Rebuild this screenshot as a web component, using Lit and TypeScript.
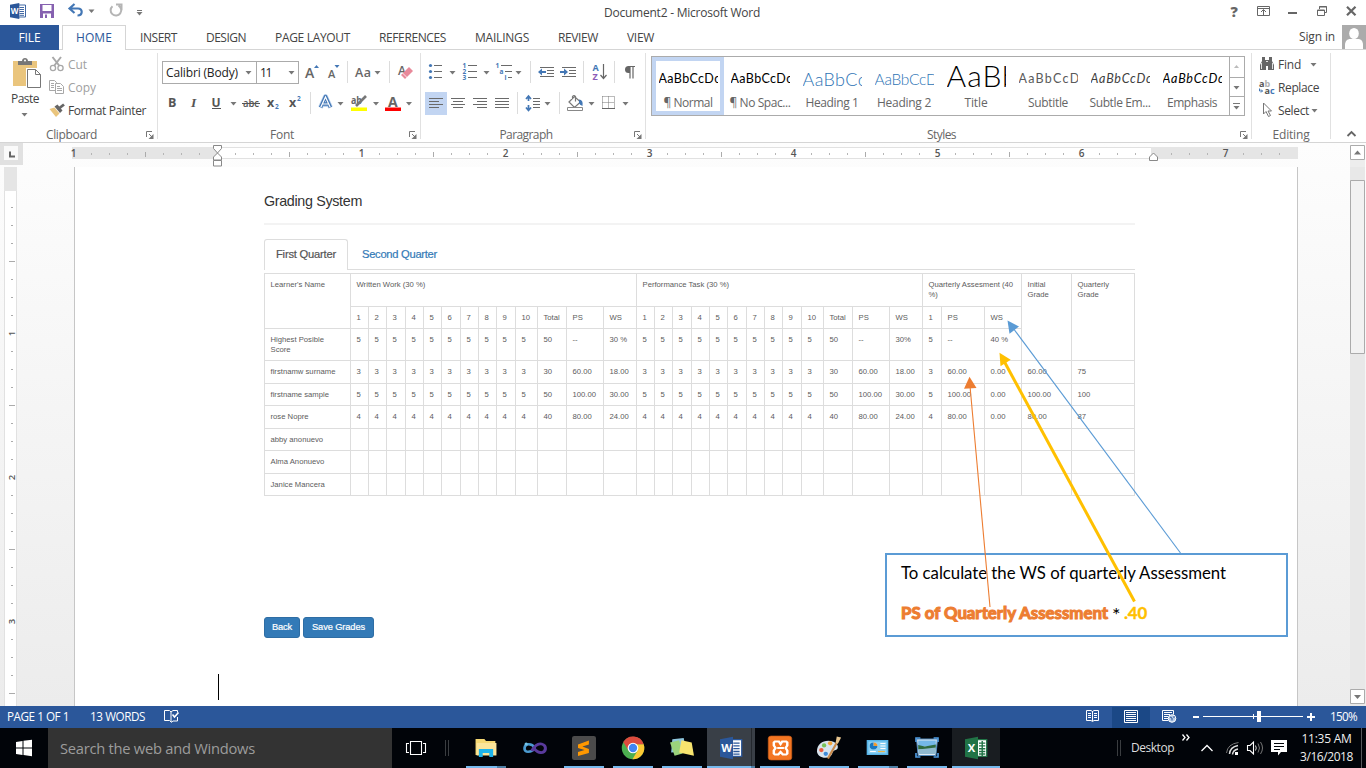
import { LitElement, html, svg, css } from "lit";
import { customElement } from "lit/decorators.js";
import { classMap } from "lit/directives/class-map.js";

// Drawing cell: every cell uses window coordinates through its viewBox.
const art = (x: number, y: number, w: number, h: number, body: unknown) =>
  html`<svg class="art" width=${w} height=${h} viewBox="${x} ${y} ${w} ${h}">${body}</svg>`;

// Label whose tracking is tuned to a given width.
const fit = (text: string, w: number, cls = "") =>
  html`<span class="fit ${cls}" data-w=${w}>${text}</span>`;

const tri = (x: number, y: number, c = "#777") => svg`<path d="M${x} ${y}h6l-3 3.4z" fill=${c} />`;
const sep = (x: number, y = 61, h = 22) => svg`<path d="M${x}.5 ${y}v${h}" stroke="#dcdcdc" />`;
const lines = (y: number, spans: number[][], step = 4, c = "#6a6a6a") =>
  spans.map(([a, b], i) => svg`<path d="M${a} ${y + i * step + 0.5}H${b}" stroke=${c} />`);

// Task bar glyphs are drawn around one centre, then placed and scaled at another.
const place = (from: number, to: number, sx: number, sy: number, body: unknown) =>
  svg`<g transform="translate(${to} 748) scale(${sx} ${sy}) translate(${-from} -748)">${body}</g>`;

const wordLogo = (x: number, y: number, s: number, letter = "W", c = "#2b579a") => svg`
  <g transform="translate(${x} ${y}) scale(${s})">
    <path d="M8 2h7.5v12H8z" fill="#fff" stroke=${c} stroke-width=".9" />
    ${letter === "W"
      ? svg`<path d="M9.5 4.5h4.5M9.5 6.5h4.5M9.5 8.5h4.5M9.5 10.5h4.5M9.5 12.3h4.5" stroke=${c} stroke-width=".9" />`
      : svg`<path d="M10 4.5h4.5M10 6.5h4.5M10 8.5h4.5M10 10.5h4.5M10 12.3h4.5M12.3 3v11" stroke=${c} stroke-width="1" />`}
    <path d="M0 1.8L9.3 0v16L0 14.2z" fill=${c} />
    <text x="4.7" y="11" text-anchor="middle" font-family="Open Sans" font-weight="700" font-size="8" fill="#fff">${letter}</text>
  </g>`;

const TABS: [string, number][] = [
  ["INSERT", 37], ["DESIGN", 40], ["PAGE LAYOUT", 75], ["REFERENCES", 67],
  ["MAILINGS", 54], ["REVIEW", 40], ["VIEW", 27],
];

const STYLES: [string, number, string, string, number][] = [
  ["¶ Normal", 49, "AaBbCcDc", "body", 62],
  ["¶ No Spac...", 61, "AaBbCcDc", "body", 62],
  ["Heading 1", 53, "AaBbCc", "h1", 64],
  ["Heading 2", 54, "AaBbCcD", "h2", 63],
  ["Title", 23, "AaBb", "title", 73],
  ["Subtitle", 40, "AaBbCcD", "sub", 62],
  ["Subtle Em...", 61, "AaBbCcDc", "subem", 62],
  ["Emphasis", 50, "AaBbCcDc", "em", 62],
];

type Cell = { t: string; c?: number; r?: number; };
const nums = ["1", "2", "3", "4", "5", "6", "7", "8", "9", "10"];
const cells = (a: string[]): Cell[] => a.map((t) => ({ t }));
const student = (name: string, v: string, total: string, ps: string, ws: string, g: string) => {
  const part = [...nums.map(() => v), total, ps, ws];
  return cells([name, ...part, ...part, v, ps, "0.00", ps, g]);
};
const blank = (name: string) => cells([name, ...Array(31).fill("")]);
const five = nums.map(() => "5");
const GRID: Cell[] = [
  { t: "Learner's Name", r: 2 },
  { t: "Written Work (30 %)", c: 13 },
  { t: "Performance Task (30 %)", c: 13 },
  { t: "Quarterly Assesment (40 %)", c: 3 },
  { t: "Initial Grade", r: 3 },
  { t: "Quarterly Grade", r: 3 },
  ...cells([...nums, "Total", "PS", "WS", ...nums, "Total", "PS", "WS", "1", "PS", "WS"]),
  ...cells(["Highest Posible Score", ...five, "50", "--", "30 %", ...five, "50", "--", "30%", "5", "--", "40 %"]),
  ...student("firstnamw surname", "3", "30", "60.00", "18.00", "75"),
  ...student("firstname sample", "5", "50", "100.00", "30.00", "100"),
  ...student("rose Nopre", "4", "40", "80.00", "24.00", "87"),
  ...blank("abby anonuevo"),
  ...blank("Alma Anonuevo"),
  ...blank("Janice Mancera"),
];

@customElement("app-root")
class AppRoot extends LitElement {
  static styles = css`
    :host { display: block; width: 1366px; height: 768px; overflow: hidden; font-family: "Open Sans", "Noto Sans", sans-serif; font-size: 12px; color: #444; background: #fff; }
    * { box-sizing: border-box; }
    svg { font-family: "Open Sans", sans-serif; }
    .art { display: block; flex: none; overflow: visible; }
    .fit { display: inline-block; white-space: pre; flex: none; }
    .row { display: flex; }
    .grow { flex: 1; }
    .app { display: flex; flex-direction: column; height: 768px; }

    .titlebar { display: grid; grid-template-columns: 604px 1fr auto; height: 25px; line-height: 25px; flex: none; }
    .tabs { display: flex; height: 25px; line-height: 25px; border-bottom: 1px solid #d5d5d5; flex: none; }
    .file { width: 59px; height: 25px; background: #2b579a; color: #fff; text-align: center; margin-right: 3px; }
    .home { width: 64px; height: 25px; border: 1px solid #d5d5d5; border-bottom: 0; background: #fff; color: #2b579a; text-align: center; line-height: 24px; }
    .tab { padding-left: 14px; padding-right: 15px; }
    .signin { line-height: 24px; padding-right: 7px; }

    .ribbon { display: flex; height: 93px; padding-top: 3px; border-bottom: 1px solid #d5d5d5; flex: none; }
    .group { display: flex; flex-direction: column; height: 86px; border-right: 1px solid #e1e1e1; flex: none; }
    .body { flex: 1; display: flex; min-height: 0; }
    .foot { display: flex; height: 10px; line-height: 12px; color: #666; }
    .foot-label { flex: 1; text-align: center; }
    .clip { width: 158px; } .font { width: 263px; } .para { width: 225px; } .styles { width: 606px; } .edit { width: 79px; }
    .stack { flex-direction: column; }
    .paste { width: 50px; text-align: center; line-height: 17px; }
    .cmd { display: flex; height: 23px; line-height: 23px; }
    .muted { color: #a0a0a0; }
    .tools { flex-direction: column; gap: 8px; padding-top: 8px; }
    .indent { padding-left: 4px; }
    .combo { display: flex; height: 23px; line-height: 21px; border: 1px solid #ababab; color: #222; padding-left: 3px; justify-content: space-between; }
    .combo-name { width: 94px; border-right: 0; }
    .combo-size { width: 43px; }

    .gallery { display: flex; width: 594px; height: 60px; margin: 3px 0 0 5px; border: 1px solid #ababab; }
    .style { width: 72px; height: 58px; border: 4px solid transparent; display: flex; flex-direction: column; align-items: center; }
    .picked { border-color: #c2d5f2; }
    .preview { width: 59px; height: 31px; overflow: hidden; font-family: Lato, sans-serif; color: #000; line-height: 36px; font-size: 12.5px; }
    .p-h1 { font-weight: 300; font-size: 18px; color: #2e74b5; }
    .p-h2 { font-weight: 300; font-size: 15.5px; color: #2e74b5; }
    .p-title { font-weight: 300; font-size: 30px; line-height: 28px; }
    .p-sub { color: #5a5a5a; }
    .p-subem { font-style: italic; color: #404040; }
    .p-em { font-style: italic; }
    .caption { height: 19px; line-height: 22px; color: #666; }

    .doc { display: flex; flex-direction: column; height: 563px; flex: none; background: linear-gradient(#fdfdfd, #ececec); overflow: hidden; }
    .canvas { display: flex; height: 539px; }
    .page { position: relative; width: 1224px; height: 539px; border: solid #c6c6c6; border-width: 0 1px; background: #fff; padding-top: 24px; font-family: "Liberation Sans", Arial, sans-serif; flex: none; }
    .sheet { width: 871px; margin-left: 189px; color: #333; }
    .heading { height: 20px; line-height: 20px; font-size: 14.3px; }
    .rule { height: 2px; margin-top: 12px; background: #f3f3f3; }
    .nav { display: flex; height: 31px; margin-top: 14px; border-bottom: 1px solid #ddd; line-height: 30px; font-size: 11.2px; }
    .nav-on { width: 84px; height: 31px; border: 1px solid #ddd; border-bottom: 0; border-radius: 3px 3px 0 0; background: #fff; padding-left: 11px; color: #555; line-height: 28px; -webkit-text-stroke: .2px #555; }
    .nav-off { padding-left: 14px; color: #337ab7; -webkit-text-stroke: .2px #337ab7; }
    .grid { display: grid; margin-top: 3px; border: solid #ddd; border-width: 1px 0 0 1px; font-size: 7.7px; line-height: 10px; color: #5c5c5c;
      grid-template-columns: 86px 18px 18px 19px 18px 18px 19px 18px 18px 19px 22px 29px 37px 33px 18px 18px 19px 18px 18px 19px 18px 18px 19px 22px 29px 37px 33px 19px 43px 37px 50px 63px;
      grid-template-rows: 33px 22px 32px 23px 22px 23px 22px 23px 22px; }
    .cell { border: solid #ddd; border-width: 0 1px 1px 0; padding: 6px 0 0 5.5px; min-width: 0; }
    .narrow { padding-right: 6px; }
    .buttons { display: flex; gap: 3px; margin-top: 121px; }
    .btn { height: 21px; border-radius: 3px; background: #337ab7; border: 1px solid #2e6da4; line-height: 19px; color: #fff; font-size: 9.3px; text-align: center; -webkit-text-stroke: .2px #fff; }
    .back { width: 36px; } .save { width: 71px; }
    .caret { width: 1px; height: 26px; margin: 36px 0 0 143px; background: #000; }
    .callout { position: absolute; left: 810px; top: 386px; width: 403px; height: 84px; border: 2px solid #5b9bd5; background: #fff; padding: 0 14px; font-family: Lato, sans-serif; font-size: 16.8px; color: #000; }
    .line-a { height: 36px; line-height: 36px; }
    .line-b { height: 40px; line-height: 43px; display: flex; }
    .star { font-size: 20px; line-height: 47px; width: 9px; }
    .orange { color: #ed7d31; font-weight: 700; -webkit-text-stroke: 1.1px #ed7d31; margin-right: 4px; }
    .gold { color: #ffc000; font-weight: 700; margin-left: 3px; -webkit-text-stroke: .4px #ffc000; }
    .arrows { position: absolute; left: 0; top: 0; }

    .status { display: flex; height: 22px; line-height: 21px; background: #2b579a; color: #fff; font-size: 11.7px; padding-left: 7px; flex: none; }
    .taskbar { display: flex; height: 40px; background: #010409; color: #fff; flex: none; }
    .search { width: 344px; background: #333; color: #9c9c9c; font-size: 14.7px; line-height: 40px; padding-left: 12px; }
    .tray { line-height: 40px; color: #ddd; }
    .clock { width: 61px; padding-top: 2px; line-height: 17.5px; text-align: center; color: #eee; }
    .words { margin-left: 21px; }
    .zoomtext { margin-left: 13px; }
  `;

  firstUpdated() {
    this.renderRoot.querySelectorAll<HTMLElement>(".fit").forEach((el) => {
      const w = Number(el.dataset.w);
      const natural = el.getBoundingClientRect().width;
      const n = (el.textContent ?? "").length;
      el.style.letterSpacing = `${((w - natural) / n).toFixed(3)}px`;
    });
  }

  launcher() {
    return art(0, 0, 14, 10, svg`<path d="M3.5 8V2.5H9" fill="none" stroke="#777" /><path d="M6 5l3 3" stroke="#777" /><path d="M10.500 5v5h-5z" fill="#777" />`);
  }

  titlebar() {
    return html`<div class="titlebar">
      <div class="row">
        ${art(0, 0, 33, 25, wordLogo(10, 3, 1))}
        ${art(33, 0, 29, 25, svg`<path d="M40 4h14v14H40z" fill="#8661b0" /><path d="M42.500 5h9v6h-9z" fill="#fff" /><path d="M43 13.500h8V18h-8z" fill="#fff" /><path d="M45 14.500h2V18h-2z" fill="#8661b0" />`)}
        ${art(62, 0, 40, 25, svg`<path d="M74.500 4l-5 4.500 5 4.500M70 8.500h8c5 0 5 7-.5 7" fill="none" stroke="#4377b5" stroke-width="2.200" />${tri(88.5, 9.5)}`)}
        ${art(102, 0, 50, 25, svg`<path d="M112.500 6.200a5.300 5.300 0 1 0 6-.6M116 4.600h5.500v5.600" fill="none" stroke="#b5b5b5" stroke-width="2" /><path d="M137 10.500h5" stroke="#777" />${tri(136.5, 12)}`)}
      </div>
      <div>${fit("Document2 - Microsoft Word", 156)}</div>
      <div class="row">
        ${art(1224, 0, 22, 25, svg`<text x="1230.500" y="16.500" font-size="14.500" font-weight="800" fill="#666">?</text>`)}
        ${art(1246, 0, 34, 25, svg`<path d="M1257.500 6.500h12v9h-12zM1257.500 8.500h12M1263.500 15v-5M1261 12l2.500-2.500 2.500 2.500" fill="none" stroke="#666" />`)}
        ${art(1280, 0, 28, 25, svg`<path d="M1288 13h9" stroke="#666" stroke-width="2" />`)}
        ${art(1308, 0, 28, 25, svg`<path d="M1317.500 10h7v5.500h-7zM1317 10.500h8M1319.500 9V6.500h7v6h-2M1319 7h8" fill="none" stroke="#666" />`)}
        ${art(1336, 0, 30, 25, svg`<path d="M1347 6.700l8.500 8.600M1355.500 6.700l-8.500 8.600" stroke="#666" stroke-width="2.200" />`)}
      </div>
    </div>`;
  }

  tabs() {
    return html`<div class="tabs">
      <div class="file">${fit("FILE", 22)}</div>
      <div class="home">${fit("HOME", 36)}</div>
      ${TABS.map(([t, w]) => html`<div class="tab">${fit(t, w)}</div>`)}
      <div class="grow"></div>
      <div class="signin">${fit("Sign in", 36)}</div>
      ${art(1342, 25, 24, 24, svg`<path d="M1342 25h24v24h-24z" fill="#ababab" /><ellipse cx="1354" cy="33.500" rx="4.800" ry="5.600" fill="#fff" /><path d="M1345 49v-4c0-4 2.500-6 5-6h8c3 0 5 2 5 6v4z" fill="#fff" />`)}
    </div>`;
  }

  clipboard() {
    return html`<div class="group clip"><div class="body">
      <div class="paste">
        ${art(0, 53, 50, 37, svg`<path d="M13 61h24v25H13z" fill="#eac57d" /><path d="M18 65v-4h4c0-4 6-4 6 0h4v4z" fill="#777" /><circle cx="25" cy="60.500" r="1" fill="#fff" /><path d="M26 68h11v18H26z" fill="#fff" /><path d="M27.500 69.500h8l5 5v13h-13z" fill="#fff" stroke="#777" /><path d="M35.500 69.500v5h5" fill="none" stroke="#777" />`)}
        ${fit("Paste", 28)}
        ${art(0, 107, 50, 15, tri(21.5, 113))}
      </div>
      <div>
        <div class="cmd muted">${art(50, 53, 18, 23, svg`<path d="M52.500 57l7 9M61 57l-7 9" stroke="#a8a8a8" stroke-width="2" /><circle cx="53" cy="68" r="2.600" fill="none" stroke="#a8a8a8" stroke-width="1.300" /><circle cx="60.500" cy="68" r="2.600" fill="none" stroke="#a8a8a8" stroke-width="1.300" />`)}${fit("Cut", 19)}</div>
        <div class="cmd muted">${art(50, 76, 18, 23, svg`<path d="M49.500 80.500h5l2 2v8h-7zM51 83.500h3M51 85.500h3M51 87.500h3" fill="none" stroke="#a8a8a8" /><path d="M55.500 83.500h5l3 3v7h-8z" fill="#fff" stroke="#a8a8a8" /><path d="M57 86.500h3M57 88.500h5M57 90.500h5" stroke="#a8a8a8" />`)}${fit("Copy", 28)}</div>
        <div class="cmd">${art(50, 99, 18, 23, svg`<path d="M49.500 109l5-1.500 5 6-3.500 3.500z" fill="#eac57d" /><path d="M54.500 106.500l3-2 5 6-2.500 2.500z" fill="#666" /><path d="M59.500 108l4.500-3.500" stroke="#666" stroke-width="2.800" />`)}${fit("Format Painter", 78)}</div>
      </div>
    </div><div class="foot"><div class="foot-label">${fit("Clipboard", 51)}</div>${this.launcher()}</div></div>`;
  }

  font() {
    return html`<div class="group font"><div class="body tools">
      <div class="row indent">
        <div class="combo combo-name">${fit("Calibri (Body)", 72)}${art(244, 62, 12, 21, tri(245.5, 71))}</div>
        <div class="combo combo-size">${fit("11", 11)}${art(286, 62, 12, 21, tri(288.5, 71))}</div>
        ${art(299, 61, 25, 23, svg`<text x="305" y="78" font-size="14" font-weight="600" fill="#666">A</text><path d="M314 68l2.500-3 2.500 3z" fill="#4377b5" />`)}
        ${art(324, 61, 24, 23, svg`<text x="328" y="78" font-size="11" font-weight="600" fill="#666">A</text><path d="M334.500 65h5l-2.500 3z" fill="#4377b5" />${sep(347)}`)}
        ${art(348, 61, 42, 23, svg`<text x="355" y="76.500" font-size="12.500" font-weight="600" fill="#666" textLength="16">Aa</text>${tri(374.5, 71)}${sep(389)}`)}
        ${art(390, 61, 30, 23, svg`<text x="398" y="75" font-size="12" font-weight="600" fill="#666">A</text><path d="M401 75l8-8 4 4-8 8z" fill="#e8899a" /><path d="M402.500 73l5 5" stroke="#fff" stroke-width=".8" />`)}
      </div>
      <div class="row indent">
        ${art(162, 92, 20, 23, svg`<text x="168" y="107" font-size="12.500" font-weight="700" fill="#555">B</text>`)}
        ${art(182, 92, 23, 23, svg`<text x="191" y="107" font-size="13.500" font-style="italic" font-weight="700" font-family="Liberation Serif" fill="#555">I</text>`)}
        ${art(205, 92, 34, 23, svg`<text x="211.500" y="106.500" font-size="12" font-weight="700" fill="#555">U</text><path d="M212 108.500h9" stroke="#555" />${tri(230.5, 102)}`)}
        ${art(239, 92, 24, 23, svg`<text x="243" y="107" font-size="11" fill="#555" font-weight="600" textLength="16" lengthAdjust="spacingAndGlyphs">abc</text><path d="M242 103.500h18" stroke="#555" />`)}
        ${art(263, 92, 22, 23, svg`<text x="267" y="107" font-size="12.500" font-weight="700" fill="#555">x</text><text x="275" y="109" font-size="6.500" font-weight="700" fill="#4377b5">2</text>`)}
        ${art(285, 92, 26, 23, svg`<text x="289" y="107" font-size="12.500" font-weight="700" fill="#555">x</text><text x="297" y="101" font-size="6.500" font-weight="700" fill="#4377b5">2</text>${sep(310, 92)}`)}
        ${art(311, 92, 36, 23, svg`<path d="M320.500 107.500L325.500 96.500L330.500 107.500M322.500 104.500h6" fill="none" stroke="#c0d6ef" stroke-width="5" stroke-linejoin="round" /><path d="M320.500 107.500L325.500 96.500L330.500 107.500M322.500 104h6" fill="none" stroke="#4377b5" stroke-width="3.400" stroke-linejoin="round" /><path d="M320.700 107.500L325.500 97L330.300 107.500M322.500 104h6" fill="none" stroke="#fff" stroke-width="1.200" />${tri(337.5, 102)}`)}
        ${art(347, 92, 34, 23, svg`<text x="351" y="104" font-size="11" font-weight="700" fill="#666" textLength="11" lengthAdjust="spacingAndGlyphs">ab</text><path d="M356 106l10-10" stroke="#777" stroke-width="2.600" /><path d="M351 107.500h16v3.500h-16z" fill="#ff0" />${tri(373, 102)}`)}
        ${art(381, 92, 39, 23, svg`<text x="388" y="107" font-size="14" font-weight="700" fill="#666">A</text><path d="M385 107.500h16v3.500h-16z" fill="red" />${tri(406, 102)}`)}
      </div>
    </div><div class="foot"><div class="foot-label">${fit("Font", 24)}</div>${this.launcher()}</div></div>`;
  }

  paragraph() {
    const dn = (x: number, y: number, t: string) => svg`<text x=${x} y=${y} font-size="6.500" font-weight="700" fill="#4377b5">${t}</text>`;
    const b = "#4377b5";
    return html`<div class="group para"><div class="body tools">
      <div class="row">
        ${art(421, 61, 37, 23, svg`${[65.5, 71.5, 77.5].map((y) => svg`<circle cx="430.500" cy=${y} r="1.600" fill=${b} /><path d="M434 ${y}h8" stroke="#6a6a6a" />`)}${tri(449.5, 71)}`)}
        ${art(458, 61, 35, 23, svg`${dn(462.5, 68, "1")}${dn(462.5, 74, "2")}${dn(462.5, 80, "3")}${lines(65, [[468, 477], [468, 477], [468, 477]], 6)}${tri(483.5, 71)}`)}
        ${art(493, 61, 38, 23, svg`${dn(495.5, 68, "1")}${dn(499.5, 74, "a")}${dn(504.5, 80, "i")}${lines(65, [[501, 512], [505, 512], [508, 512]], 6)}${tri(515.5, 71)}${sep(530)}`)}
        ${art(531, 61, 26, 23, svg`${lines(67, [[540, 554], [547, 554], [547, 554], [540, 554]], 3)}<path d="M538 72l4-3.500v2.500h4v2h-4v2.500z" fill=${b} />`)}
        ${art(557, 61, 27, 23, svg`${lines(67, [[562, 576], [569, 576], [569, 576], [562, 576]], 3)}<path d="M568 72l-4-3.500v2.500h-4v2h4v2.500z" fill=${b} />${sep(583)}`)}
        ${art(584, 61, 31, 23, svg`<text x="592.500" y="71" font-size="9" font-weight="700" fill=${b}>A</text><text x="592.500" y="79.500" font-size="9" font-weight="700" fill="#8c5cb8">Z</text><path d="M603.500 64v14M600.500 75l3 3.500 3-3.500" fill="none" stroke="#666" stroke-width="1.200" />${sep(614)}`)}
        ${art(615, 61, 30, 23, svg`<path d="M630 66.500v12M633 66.500v12M628 66.500h7" stroke="#666" stroke-width="1.200" /><path d="M630 66h-1.500a3.300 3.300 0 0 0 0 7H630z" fill="#666" />`)}
      </div>
      <div class="row">
        ${art(421, 92, 27, 23, svg`<path d="M425 92h22v23h-22z" fill="#c2d5f2" />${lines(98, [[429, 443], [429, 439], [429, 443], [429, 439]], 3)}`)}
        ${art(448, 92, 22, 23, lines(98, [[451, 465], [453, 463], [451, 465], [453, 463]], 3))}
        ${art(470, 92, 21, 23, lines(98, [[473, 487], [477, 487], [473, 487], [477, 487]], 3))}
        ${art(491, 92, 27, 23, svg`${lines(98, [[495, 509], [495, 509], [495, 509], [495, 509]], 3)}${sep(517, 92)}`)}
        ${art(518, 92, 42, 23, svg`<path d="M528.500 97v4M528.500 105v4M526 99l2.500-3 2.500 3M526 107.500l2.500 3 2.500-3" fill="none" stroke=${b} stroke-width="1.700" />${lines(98, [[533, 540], [533, 540], [533, 540], [533, 540]], 3)}${tri(544.5, 102)}${sep(559, 92)}`)}
        ${art(560, 92, 38, 23, svg`<path d="M569 102l5.500-5.500 6 5.500-6 5.500zM572.500 99v-2.500q1.500-2 3 0v5" fill="#fff" stroke="#777" stroke-width="1.200" /><path d="M579 99.500q4.500 0 3.500 6.500-3-1-3.500-3z" fill=${b} /><path d="M567.500 107.500h15v3h-15z" fill="#fff" stroke="#888" />${tri(588.5, 102)}`)}
        ${art(598, 92, 47, 23, svg`<path d="M602.500 96.500h12v12M602.500 96.500v12M608.500 96.500v12M602.500 102.500h12" fill="none" stroke="#777" stroke-dasharray="1 1" /><path d="M602 108.500h13" stroke="#666" />${tri(622.5, 102)}`)}
      </div>
    </div><div class="foot"><div class="foot-label">${fit("Paragraph", 53)}</div>${this.launcher()}</div></div>`;
  }

  styleGallery() {
    return html`<div class="group styles"><div class="body">
      <div class="gallery">
        ${STYLES.map(([name, w, sample, kind, pw], i) => html`<div class=${classMap({ style: true, picked: i === 0 })}>
          <div class="preview p-${kind}">${fit(sample, pw)}</div>
          <div class="caption">${fit(name, w)}</div>
        </div>`)}
        ${art(1228, 57, 15, 58, svg`<path d="M1229.500 57v58M1229 77.500h15M1229 96.500h15" stroke="#ababab" /><path d="M1234 68h5l-2.500-3z" fill="#bbb" />${tri(1233.5, 86)}${tri(1233.5, 106)}<path d="M1233 103.500h7" stroke="#777" />`)}
      </div>
    </div><div class="foot"><div class="foot-label">${fit("Styles", 29)}</div>${this.launcher()}</div></div>`;
  }

  editing() {
    return html`<div class="group edit"><div class="body stack">
      <div class="cmd">${art(1252, 53, 26, 23, svg`<path d="M1262 57h3v3h4v-3h3v4l2 4v5h-6v-4h-2v4h-6v-5l2-4z" fill="#666" /><path d="M1261.500 63v6M1272.500 63v6M1266 61.500h2" stroke="#fff" stroke-width=".8" />`)}${fit("Find", 23)}${art(1301, 53, 20, 23, tri(1310.5, 63))}</div>
      <div class="cmd">${art(1252, 76, 26, 23, svg`<text x="1259" y="86.500" font-size="9" font-weight="700" fill="#555">a<tspan fill="#b0b0b0">b</tspan></text><text x="1264.500" y="94" font-size="9" font-weight="700" fill="#555">a<tspan fill="#4377b5">c</tspan></text><path d="M1259.500 88.500v2.500h3M1261 89.500l1.500 1.500-1.500 1.500" fill="none" stroke="#4377b5" />`)}${fit("Replace", 41)}</div>
      <div class="cmd">${art(1252, 99, 26, 23, svg`<path d="M1263.500 103v11l2.500-2.500 2.500 5 2-1-2.500-4.500h3.500z" fill="#fff" stroke="#777" />`)}${fit("Select", 31)}${art(1309, 99, 12, 23, tri(1311.5, 109))}</div>
    </div><div class="foot"><div class="foot-label">${fit("Editing", 37)}</div></div></div>`;
  }

  hRuler() {
    const marks = [];
    for (let k = -8; k < 60; k++) {
      if (k === 0 || k === 52) continue;
      const x = 217 + k * 18;
      if (k % 8 === 0) marks.push(svg`<text x=${x + 0.5} y="157" text-anchor="middle" font-size="10" font-weight="600" fill="#555">${Math.abs(k / 8)}</text>`);
      else if (k % 4 === 0) marks.push(svg`<path d="M${x + 0.5} 152v5" stroke="#ababab" />`);
      else marks.push(svg`<path d="M${x + 0.5} 153v2" stroke="#b5b5b5" />`);
    }
    return art(0, 143, 1366, 24, svg`
      <path d="M0 143h23v22H0z" fill="#e1e1e1" /><path d="M4 146h14v14H4z" fill="#fafafa" /><path d="M10 151.500v5h5" fill="none" stroke="#666" stroke-width="2" />
      <path d="M72 147h146v12H72zM1151 147h147v12h-147z" fill="#e5e5e5" /><path d="M218 147h933v12H218z" fill="#fff" />
      <path d="M218 147.500h933M218 158.500h933" stroke="#e1e1e1" />
      ${marks}
      <path d="M213.500 145.500h8v3l-4 4.500 4 4v3h-8v-3l4-4-4-4.500zM213.500 160.500h8v5.500h-8z" fill="#fff" stroke="#888" />
      <path d="M1153.500 153l4 4v3.500h-8V157z" fill="#fff" stroke="#888" />
      <path d="M1350.500 145.500h14v14h-14z" fill="#fff" stroke="#ababab" /><path d="M1354 154.500h7l-3.500-4z" fill="#777" /><path d="M1350 160h15v7h-15z" fill="#ededed" />`);
  }

  vRuler() {
    const marks = [];
    for (let k = 1; k < 29; k++) {
      const y = 189 + k * 18;
      if (k % 8 === 0) marks.push(svg`<text transform="translate(15 ${y + 0.5}) rotate(-90)" text-anchor="middle" font-size="9.500" font-weight="600" fill="#555">${k / 8}</text>`);
      else if (k % 4 === 0) marks.push(svg`<path d="M9 ${y + 0.5}h6" stroke="#ababab" />`);
      else marks.push(svg`<path d="M11 ${y + 0.5}h2" stroke="#ababab" />`);
    }
    return art(0, 167, 74, 539, svg`<path d="M4 167h13v24H4z" fill="#e5e5e5" /><path d="M4.500 191v516M16.500 191v516" stroke="#e1e1e1" /><path d="M5 191h11v516H5z" fill="#fff" />${marks}`);
  }

  document() {
    return html`<div class="doc">
      ${this.hRuler()}
      <div class="canvas">
        ${this.vRuler()}
        <div class="page">
          <div class="sheet">
            <div class="heading">${fit("Grading System", 98)}</div>
            <div class="rule"></div>
            <div class="nav"><div class="nav-on">${fit("First Quarter", 60)}</div><div class="nav-off">${fit("Second Quarter", 75)}</div></div>
            <div class="grid">
              ${GRID.map((c) => c.c || c.r
                ? html`<div class="cell narrow" style="grid-column: span ${c.c ?? 1}; grid-row: span ${c.r ?? 1}">${c.t}</div>`
                : html`<div class=${classMap({ cell: true, narrow: c.t.startsWith("Highest") })}>${c.t}</div>`)}
            </div>
            <div class="buttons"><div class="btn back">${fit("Back", 20)}</div><div class="btn save">${fit("Save Grades", 53)}</div></div>
          </div>
          <div class="caret"></div>
          <div class="callout">
            <div class="line-a">${fit("To calculate the WS of quarterly Assessment", 325)}</div>
            <div class="line-b">${fit("PS of Quarterly Assessment", 207, "orange")}<span class="star">*</span>${fit(".40", 23, "gold")}</div>
          </div>
          <svg class="arrows" width="1222" height="539" viewBox="75 167 1222 539">
            <path d="M1013 328L1180.500 553" stroke="#5b9bd5" stroke-width="1.100" /><path d="M1007.500 320.500l11.500 6-9.500 7.200z" fill="#5b9bd5" />
            <path d="M970 386l20 221" stroke="#ed7d31" stroke-width="1.100" /><path d="M969.500 376.800l7 11.200-12.500.8z" fill="#ed7d31" />
            <path d="M1004 361l130.500 240.500" stroke="#ffc000" stroke-width="3" /><path d="M999.500 352.800l11.200 7-10.200 6.500z" fill="#ffc000" />
          </svg>
        </div>
        ${art(1298, 167, 68, 539, svg`<path d="M1350 167h15v539h-15z" fill="#e8e8e8" /><path d="M1350.500 180.500h14v173h-14z" fill="#f2f2f2" stroke="#ababab" /><path d="M1350.500 689.500h14v14h-14z" fill="#fff" stroke="#ababab" /><path d="M1354 695h7l-3.500 4z" fill="#777" />`)}
      </div>
    </div>`;
  }

  status() {
    return html`<div class="status">
      ${fit("PAGE 1 OF 1", 62)}${fit("13 WORDS", 55, "words")}
      ${art(145, 706, 60, 22, svg`<path d="M164.500 710.500h5l1.500 1.500v10l-1.500-1.500h-5zM171 712l2-1.500h4.500v2M177.500 717v4H173l-2 1.500" fill="none" stroke="#fff" /><path d="M172.500 714.500l2 2.500 4-4.500" fill="none" stroke="#fff" stroke-width="1.600" />`)}
      <div class="grow"></div>
      ${art(1074, 706, 38, 22, svg`<path d="M1086.500 710.500h4.500l1.500 1 1.500-1h4.500v10h-4.500l-1.500 1-1.500-1h-4.500zM1092.500 711v10M1088 713.500h3M1088 715.500h3M1088 717.500h3M1094 713.500h3M1094 715.500h3M1094 717.500h3" fill="none" stroke="#fff" />`)}
      ${art(1112, 706, 38, 22, svg`<path d="M1112 707h38v21h-38z" fill="#1b4886" /><path d="M1124.500 710.500h13v12h-13zM1126 712.500h10M1126 714.500h10M1126 716.500h10M1126 718.500h10M1126 720.500h10" fill="none" stroke="#fff" />`)}
      ${art(1150, 706, 36, 22, svg`<path d="M1168 720.500h-5.500v-10h11v4M1164 712.500h8M1164 714.500h6M1164 716.500h4M1164 718.500h4" fill="none" stroke="#fff" /><circle cx="1172" cy="718.500" r="3.800" fill="#b8cbe6" stroke="#fff" /><path d="M1170 717l2 1 0 2.500M1174 716v2" stroke="#2b579a" fill="none" />`)}
      ${art(1186, 706, 131, 22, svg`<path d="M1193 717h6" stroke="#fff" stroke-width="2" /><path d="M1203 716.500h100M1253.500 714v5" stroke="#fff" /><path d="M1257 711h4v11h-4z" fill="#fff" /><path d="M1307 717h8M1311 713v8" stroke="#fff" stroke-width="2" />`)}
      ${fit("150%", 27, "zoomtext")}<div class="row">${art(1357, 706, 9, 22, svg``)}</div>
    </div>`;
  }

  taskbar() {
    const bar = (x: number, w: number, tail = 0) => svg`<path d="M${x} 766h${w}v2h-${w}z" fill="#76b9ed" />${tail ? svg`<path d="M${x + w} 766h${tail}v2h-${tail}z" fill="#4e7fa5" />` : ""}`;
    return html`<div class="taskbar">
      ${art(0, 728, 48, 40, svg`<path d="M16 742l6.500-1v6.500H16zM23.500 740.800L32 739.700v7.800h-8.500zM16 748.500h6.500v6.500L16 754zM23.500 748.500H32v7.800l-8.500-1.200z" fill="#fff" />`)}
      <div class="search">${fit("Search the web and Windows", 195)}</div>
      ${art(392, 728, 57, 40, svg`<path d="M410.500 741.500h11v13h-11zM409 743.500h-2.500v9h2.500M423 743.500h2.500v9H423" fill="none" stroke="#fff" stroke-width="1.100" /><path d="M445.500 740v16M448.500 740v16" stroke="#3a3d40" />`)}
      ${art(449, 728, 62, 40, svg`${place(481.5, 486, 1.1, 1, svg`<path d="M472 739h8l1.500 2H490v14h-18z" fill="#f5d873" /><path d="M473 743h18v12.500h-18z" fill="#fbe59a" /><path d="M475 757v-8h13v8h-3.500v-4h-6v4z" fill="#1eb4ea" />`)}${bar(466, 31, 9)}`)}
      ${art(511, 728, 49, 40, place(525, 535, 1.1, 1, svg`<path d="M525 748c-3-5-9-5-9.500 0s6 5 9.500 0" fill="none" stroke="#4b9bd0" stroke-width="2.500" /><path d="M522 751c2-4 5-8 9-7 5 1.500 4.500 9-1 8.500-3 0-5-3-7-5" fill="none" stroke="#593a9c" stroke-width="2.800" /><circle cx="517" cy="744" r="1.500" fill="#73c4e8" />`))}
      ${art(560, 728, 49, 40, svg`${place(570, 584, 1.09, 1, svg`<rect x="559" y="736" width="22" height="24" rx="2" fill="#4b4b4b" /><path d="M564.500 744.500l10-4v4l-6 2 6 2.500v4l-10 3v-4l6-2-6-2z" fill="#ff9800" />`)}${bar(564, 40)}`)}
      ${art(609, 728, 49, 40, svg`${place(614, 633, 1.07, 1.07, svg`<circle cx="614" cy="748" r="10.500" fill="#4caf50" /><path d="M614 748l4.500 2-5 8.500A10.500 10.500 0 0 0 624 744.500H614z" fill="#fcc934" /><path d="M604.900 742.500l5 8L614 744.500h10A10.500 10.500 0 0 0 604.900 742.500z" fill="#dd4b3e" /><circle cx="614" cy="748" r="5" fill="#fff" /><circle cx="614" cy="748" r="3.900" fill="#4285f4" />`)}${bar(613, 40)}`)}
      ${art(658, 728, 49, 40, svg`${place(658.5, 682, 1.14, 1.1, svg`<path d="M650 740l10-1 2 12-13 1z" fill="#8fc7de" /><path d="M648 743l8-2 3 12-7 2z" fill="#9bd37c" /><path d="M658 741l9 2 2 12-13-3z" fill="#f7e46f" />`)}${bar(662, 40)}`)}
      ${art(707, 728, 49, 40, svg`<path d="M707 728h48v40h-48z" fill="#393f47" /><path d="M751.500 728v40" stroke="#23282e" />${wordLogo(720, 736.8, 1.4)}${bar(707, 44, 4)}`)}
      ${art(756, 728, 49, 40, svg`${place(746.5, 780, 1.12, 1, svg`<rect x="736" y="736" width="21" height="24" rx="2.500" fill="#f37623" stroke="#c65a16" stroke-width=".6" /><path d="M742 741.500h3.500l1.500 2.500 1.500-2.500h3.500l1 1v3l-1.500 2.500 1.500 2.500v3l-1 1H749l-2-2.500-2 2.500h-3l-1-1v-3l1.500-2.500-1.500-2.500v-3z" fill="none" stroke="#fff" stroke-width="2.200" /><path d="M744 748h6" stroke="#fff" stroke-width="2" />`)}${bar(760, 40)}`)}
      ${art(805, 728, 49, 40, svg`${place(790.5, 828.5, 1.1, 1.05, svg`<path d="M780 751c0-8 8-12 15-9 5 2 5 7 2 8-4 1-2 4-5 6-5 3-12 0-12-5z" fill="#d7e3ed" /><circle cx="784" cy="750" r="2" fill="#e95b3c" /><circle cx="786.500" cy="745.500" r="2" fill="#78c257" /><circle cx="792" cy="743.500" r="2" fill="#f2a33a" /><circle cx="788" cy="753.500" r="2" fill="#3c8ad8" /><path d="M790 758l9-17" stroke="#c98b4c" stroke-width="2" /><path d="M797 743l1-6 4 1-3 6z" fill="#e8c690" />`)}${bar(809, 40)}`)}
      ${art(854, 728, 49, 40, svg`${place(834.5, 877.5, 1.14, 1, svg`<path d="M825 740h19v15h-19z" fill="#58b5e8" /><path d="M826.500 741.500h16v12h-16z" fill="#8bd0f4" /><circle cx="831" cy="746" r="3.300" fill="#fff" /><path d="M831 746v-3.500a3.500 3.500 0 0 1 3.500 3.500z" fill="#f29a2e" /><path d="M831 746h3.400a3.400 3.400 0 1 1-3.400-3.400z" fill="#1978c1" /><path d="M837 743.500h4.500M837 746h4.500M837 748.500h4.500M828 751.500h5" stroke="#fff" stroke-width="1.200" /><path d="M835 751.500h6" stroke="#e8b64b" stroke-width="1.200" />`)}${bar(858, 31, 9)}`)}
      ${art(903, 728, 49, 40, svg`${place(878.5, 927, 1.1, 1, svg`<path d="M869 739h19l-1.500 16.500h-16z" fill="#dfeaf2" stroke="#4f86b8" /><path d="M870.500 740.500h16v6h-16z" fill="#74b7e8" /><path d="M870.500 745l6 1.500 10-2v5h-16z" fill="#2f6a3f" /><path d="M870.500 749.500l16-2v6.500h-15z" fill="#8fb9cf" /><path d="M868.500 742v-4h4M884.500 738h4v4M868.500 753v4h4M884.500 757h4v-4" fill="none" stroke="#4f9be0" stroke-width="1.500" />`)}${bar(907, 40)}`)}
      ${art(952, 728, 48, 40, svg`<path d="M952 728h48v40h-48z" fill="#191d21" />${wordLogo(965, 736.8, 1.4, "X", "#217346")}${bar(952, 48)}`)}
      <div class="grow"></div>
      ${art(1111, 728, 20, 40, svg`<path d="M1117.500 740v16M1120.500 740v16" stroke="#3a3d40" />`)}
      <div class="tray">${fit("Desktop", 43)}</div>
      ${art(1174, 728, 23, 40, svg`<path d="M1182.500 734.500l2.500 3-2.500 3M1186.500 734.500l2.500 3-2.500 3" fill="none" stroke="#fff" stroke-width="1.300" />`)}
      ${art(1197, 728, 22, 40, svg`<path d="M1201.500 751l5.500-5.500 5.500 5.500" fill="none" stroke="#fff" stroke-width="1.300" />`)}
      ${art(1219, 728, 25, 40, svg`<path d="M1226.500 753q1-9 12-10.500" fill="none" stroke="#777" /><path d="M1229.500 754q.5-7 8.500-8.500M1232.500 754.500q.5-4.500 5.500-5.500" fill="none" stroke="#ddd" stroke-width="1.500" /><path d="M1235 752h3v3h-3z" fill="#fff" />`)}
      ${art(1244, 728, 24, 40, svg`<path d="M1247.500 745.500h2.500l3.500-3.500v12l-3.500-3.500h-2.500z" fill="none" stroke="#fff" stroke-width="1.100" /><path d="M1255.500 745.500q1.500 2.500 0 5" fill="none" stroke="#ddd" /><path d="M1258 743.500q3 4.500 0 9M1260.500 742q4 6 0 12" fill="none" stroke="#777" />`)}
      ${art(1268, 728, 28, 40, svg`<path d="M1271 740h16v12h-6l-3 3.500v-3.500h-7z" fill="#fff" /><path d="M1274 743.500h10M1274 746.500h10M1274 749.500h6" stroke="#010409" />`)}
      <div class="clock"><div>${fit("11:35 AM", 50)}</div><div>${fit("3/16/2018", 53)}</div></div>
      ${art(1357, 728, 9, 40, svg`<path d="M1361.500 728v40" stroke="#55585b" />`)}
    </div>`;
  }

  render() {
    return html`<div class="app">
      ${this.titlebar()}${this.tabs()}
      <div class="ribbon">
        ${this.clipboard()}${this.font()}${this.paragraph()}${this.styleGallery()}${this.editing()}
        ${art(1331, 53, 35, 88, svg`<path d="M1347.500 136l4-4 4 4" fill="none" stroke="#666" stroke-width="1.800" />`)}
      </div>
      ${this.document()}${this.status()}${this.taskbar()}
    </div>`;
  }
}
